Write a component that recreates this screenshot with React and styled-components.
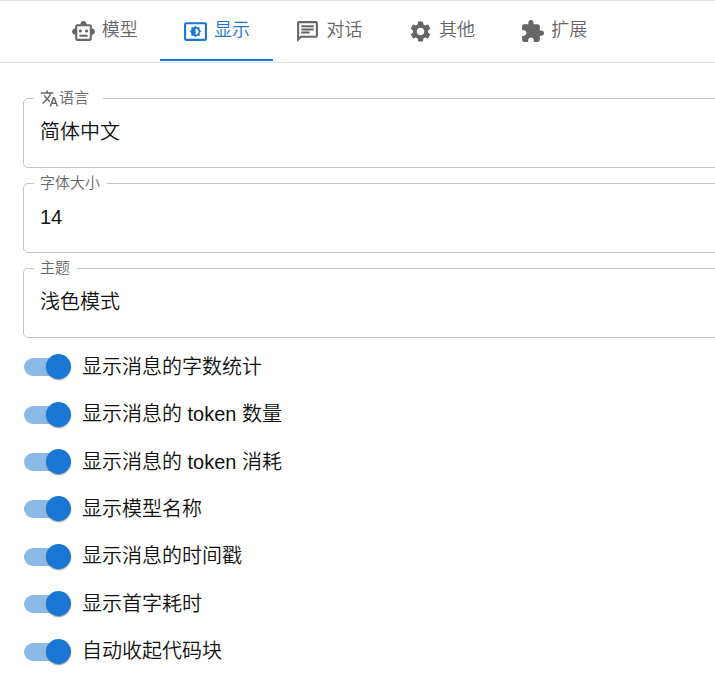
import React, { useState } from "react";
import styled, { createGlobalStyle } from "styled-components";
import {
  MdOutlineSmartToy,
  MdOutlineSettingsBrightness,
  MdOutlineChat,
  MdSettings,
  MdExtension,
  MdTranslate,
} from "react-icons/md";

const GlobalStyle = createGlobalStyle`
  *, *::before, *::after { box-sizing: border-box; }
  body {
    margin: 0;
    background: #fff;
    color: #111;
    font-family: "Liberation Sans", "Noto Sans CJK SC", sans-serif;
    font-weight: 350;
  }
`;

const Page = styled.main`
  overflow: hidden;
`;

const Header = styled.header`
  padding: 0 48px 1px;
  border-top: 1px solid #e0e0e0;
  border-bottom: 1px solid #e0e0e0;
`;

const TabList = styled.div`
  display: grid;
  grid-template-columns: repeat(5, 1fr);
  max-width: 562px;
`;

const Tab = styled.button`
  display: flex;
  align-items: center;
  justify-content: center;
  gap: 6px;
  height: 60px;
  padding: 0;
  border: 0;
  background: none;
  box-shadow: ${(p) => (p.$active ? "inset 0 -2px #1976d2" : "none")};
  color: ${(p) => (p.$active ? "#1976d2" : "#666")};
  font: inherit;
  font-size: 18px;
  line-height: 24px;
  white-space: nowrap;
  cursor: pointer;

  svg {
    flex: none;
    width: 25px;
    height: 25px;
  }
`;

const TabText = styled.span`
  padding-bottom: 2px;
`;

const Panel = styled.form`
  padding: 25px 0 0 23px;
`;

const Fields = styled.div`
  display: grid;
  width: 110%;
`;

const Field = styled.fieldset`
  min-width: 0;
  height: 80px;
  margin: 0 0 5px;
  padding: 0;
  border: 1px solid #c4c4c4;
  border-radius: 5px;
`;

const Legend = styled.legend`
  height: 20px;
  margin-left: 10px;
  padding: 0 ${(p) => (p.$wide ? 14 : 7)}px 0 6px;
  color: #666;
  font-size: 15px;
  line-height: 20px;
`;

const FieldLabel = styled.label`
  display: flex;
  align-items: center;

  svg {
    width: 19px;
    height: 19px;
  }
`;

const Select = styled.select`
  display: block;
  width: 100%;
  height: 48px;
  padding: 0 16px;
  border: 0;
  background: none;
  appearance: none;
  color: inherit;
  font: inherit;
  font-size: 20px;
`;

const SwitchList = styled.div`
  display: grid;
  grid-auto-rows: 1fr;
  height: 332px;
`;

const SwitchRow = styled.label`
  display: flex;
  align-items: center;
  gap: 11px;
  padding-left: 1px;
  font-size: 20px;
  line-height: 30px;
  cursor: pointer;
`;

const Switch = styled.input`
  position: relative;
  flex: none;
  width: 47px;
  height: 25px;
  margin: 0;
  appearance: none;
  cursor: pointer;

  &::before {
    content: "";
    position: absolute;
    top: 4px;
    left: 0;
    width: 43px;
    height: 18px;
    border-radius: 9px;
    background: #9e9e9e;
  }

  &::after {
    content: "";
    position: absolute;
    top: 0;
    left: 0;
    width: 25px;
    height: 25px;
    border-radius: 50%;
    background: #fff;
    box-shadow: 0 2px 1px -1px rgba(0, 0, 0, 0.2), 0 1px 1px rgba(0, 0, 0, 0.14),
      0 1px 3px rgba(0, 0, 0, 0.12);
  }

  &:checked::before {
    background: #8cbae8;
  }

  &:checked::after {
    left: 22px;
    background: #1976d2;
  }
`;

const tabs = [
  { label: "模型", Icon: MdOutlineSmartToy },
  { label: "显示", Icon: MdOutlineSettingsBrightness },
  { label: "对话", Icon: MdOutlineChat },
  { label: "其他", Icon: MdSettings },
  { label: "扩展", Icon: MdExtension },
];

const fields = [
  { id: "language", label: "语言", value: "简体中文", Icon: MdTranslate },
  { id: "font-size", label: "字体大小", value: "14" },
  { id: "theme", label: "主题", value: "浅色模式" },
];

const switches = [
  "显示消息的字数统计",
  "显示消息的 token 数量",
  "显示消息的 token 消耗",
  "显示模型名称",
  "显示消息的时间戳",
  "显示首字耗时",
  "自动收起代码块",
];

export default function App() {
  const [active, setActive] = useState("显示");

  return (
    <Page lang="zh-CN">
      <GlobalStyle />
      <Header>
        <TabList role="tablist">
          {tabs.map(({ label, Icon }) => (
            <Tab
              key={label}
              type="button"
              role="tab"
              aria-selected={label === active}
              $active={label === active}
              onClick={() => setActive(label)}
            >
              <Icon aria-hidden="true" />
              <TabText>{label}</TabText>
            </Tab>
          ))}
        </TabList>
      </Header>
      <Panel>
        <Fields>
          {fields.map(({ id, label, value, Icon }) => (
            <Field key={id}>
              <Legend $wide={Boolean(Icon)}>
                <FieldLabel htmlFor={id}>
                  {Icon && <Icon aria-hidden="true" />}
                  {label}
                </FieldLabel>
              </Legend>
              <Select id={id} defaultValue={value}>
                <option>{value}</option>
              </Select>
            </Field>
          ))}
        </Fields>
        <SwitchList>
          {switches.map((label) => (
            <SwitchRow key={label}>
              <Switch type="checkbox" role="switch" defaultChecked />
              {label}
            </SwitchRow>
          ))}
        </SwitchList>
      </Panel>
    </Page>
  );
}
